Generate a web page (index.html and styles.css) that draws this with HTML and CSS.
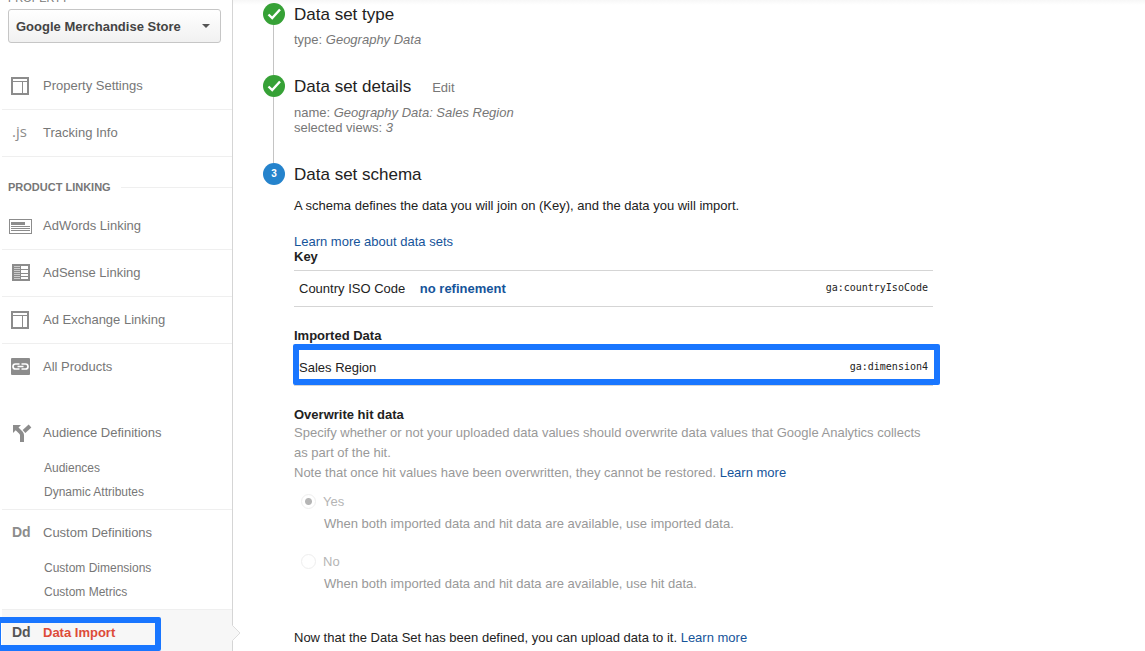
FILE: index.html
```html
<!DOCTYPE html>
<html lang="en">
  <head>
    <meta charset="UTF-8" />
    <meta name="viewport" content="width=device-width, initial-scale=1.0" />
    <title>Data Import</title>
    <link rel="stylesheet" href="styles.css">
  </head>
  <body>
    <div class="app">
      <aside class="sidebar">
        <label class="property-label" for="property">PROPERTY</label>
        <div class="property-picker">
          <select id="property">
            <option>Google Merchandise Store</option>
          </select>
          <svg class="caret" width="8" height="4" viewBox="0 0 8 4"><path d="M0 0h8L4 4z" fill="#555"/></svg>
        </div>

        <nav>
          <ul class="menu">
            <li>
              <a class="item" href="#">
                <svg class="icon" width="24" height="22" viewBox="0 0 24 22" shape-rendering="crispEdges"><path d="M3 3h18v18H3zM5 5v2h14V5zM5 8v11h9V8zM15 8v11h4V8z" fill="#8c8c8c" fill-rule="evenodd"/></svg>
                Property Settings
              </a>
            </li>
            <li>
              <a class="item" href="#"><span class="icon js">.js</span>Tracking Info</a>
            </li>
          </ul>

          <h2 class="section-title">PRODUCT LINKING</h2>
          <ul class="menu linking">
            <li>
              <a class="item" href="#">
                <svg class="icon" width="24" height="22" viewBox="0 0 24 22" shape-rendering="crispEdges"><path d="M1 5h23v15H1zM2 6v13h21V6zM3 8h14v3H3zM3 12h19v1H3zM3 14h19v1H3zM3 16h19v1H3z" fill="#8c8c8c" fill-rule="evenodd"/></svg>
                AdWords Linking
              </a>
            </li>
            <li>
              <a class="item" href="#">
                <svg class="icon" width="24" height="22" viewBox="0 0 24 22" shape-rendering="crispEdges"><path d="M4 3h18v17H4z" fill="#8c8c8c"/><path d="M6 5h6v1H6zM6 7h6v1H6zM6 9h6v1H6zM6 11h6v1H6zM6 13h6v1H6zM6 15h6v1H6zM6 17h6v1H6z" fill="#ccc"/><path d="M13 5h7v3h-7zM13 9h7v3h-7zM13 13h7v2h-7zM13 16h7v2h-7z" fill="#fff"/></svg>
                AdSense Linking
              </a>
            </li>
            <li>
              <a class="item" href="#">
                <svg class="icon" width="24" height="22" viewBox="0 0 24 22" shape-rendering="crispEdges"><path d="M3 3h18v18H3zM5 5v2h14V5zM5 8v11h9V8zM15 8v11h4V8z" fill="#8c8c8c" fill-rule="evenodd"/></svg>
                Ad Exchange Linking
              </a>
            </li>
            <li>
              <a class="item" href="#">
                <svg class="icon" width="24" height="22" viewBox="0 0 24 22"><rect x="3" y="3" width="19" height="17" rx="1" fill="#8c8c8c"/><path d="M11.500 9H7.500a2.500 2.500 0 0 0 0 5h4M13.500 9h4a2.500 2.500 0 0 1 0 5h-4M9.500 11.500h6" fill="none" stroke="#fff" stroke-width="1.700"/></svg>
                All Products
              </a>
            </li>
          </ul>

          <ul class="menu">
            <li>
              <a class="item" href="#">
                <svg class="icon" width="24" height="22" viewBox="0 0 24 22"><path d="M5 4h8l-2.500 2.500L14.500 10.500Q16 12 16 14V21h-4V14.500Q12 13.500 11.500 13L7.700 9.300 5 12z" fill="#8c8c8c"/><path d="M16 10.500l6-5.500" stroke="#8c8c8c" stroke-width="4"/></svg>
                Audience Definitions
              </a>
              <ul class="submenu">
                <li><a href="#">Audiences</a></li>
                <li><a href="#">Dynamic Attributes</a></li>
              </ul>
            </li>
            <li>
              <a class="item" href="#"><span class="icon dd">Dd</span>Custom Definitions</a>
              <ul class="submenu">
                <li><a href="#">Custom Dimensions</a></li>
                <li><a href="#">Custom Metrics</a></li>
              </ul>
            </li>
            <li class="active">
              <a class="item" href="#"><span class="icon dd">Dd</span>Data Import</a>
              <svg class="pointer" width="9" height="16" viewBox="0 0 9 16"><path d="M0 0l8 8-8 8z" fill="#f7f7f7"/><path d="M0.500 0.500L8 8l-7.500 7.500" fill="none" stroke="#ddd"/></svg>
              <span class="highlight highlight-menu"></span>
            </li>
          </ul>
        </nav>
      </aside>

      <main class="content">
        <section class="step">
          <div class="marker">
            <svg width="22" height="22" viewBox="0 0 22 22"><circle cx="11" cy="11" r="11" fill="#36a136"/><path d="M5.500 11.500l3.700 3.500 7.800-8.500" fill="none" stroke="#fff" stroke-width="2.400"/></svg>
          </div>
          <div class="step-body type-step">
            <h1>Data set type</h1>
            <p class="summary">type: <i>Geography Data</i></p>
          </div>
        </section>

        <section class="step">
          <div class="marker">
            <svg width="22" height="22" viewBox="0 0 22 22"><circle cx="11" cy="11" r="11" fill="#36a136"/><path d="M5.500 11.500l3.700 3.500 7.800-8.500" fill="none" stroke="#fff" stroke-width="2.400"/></svg>
          </div>
          <div class="step-body details-step">
            <div class="step-head">
              <h1>Data set details</h1>
              <a class="edit" href="#">Edit</a>
            </div>
            <p class="summary">name: <i>Geography Data: Sales Region</i><br>selected views: <i>3</i></p>
          </div>
        </section>

        <section class="step">
          <div class="marker"><span class="number">3</span></div>
          <div class="step-body">
            <h1>Data set schema</h1>
            <p class="intro">A schema defines the data you will join on (Key), and the data you will import.</p>
            <a href="#">Learn more about data sets</a>

            <h3>Key</h3>
            <table>
              <tr>
                <td>Country ISO Code <a class="refine" href="#">no refinement</a></td>
                <td class="code">ga:countryIsoCode</td>
              </tr>
            </table>

            <h3 class="spaced">Imported Data</h3>
            <div class="imported">
              <table>
                <tr>
                  <td>Sales Region</td>
                  <td class="code">ga:dimension4</td>
                </tr>
              </table>
              <span class="highlight highlight-row"></span>
            </div>

            <h3 class="spaced">Overwrite hit data</h3>
            <p class="help">Specify whether or not your uploaded data values should overwrite data values that Google Analytics collects as part of the hit.<br>Note that once hit values have been overwritten, they cannot be restored. <a href="#">Learn more</a></p>

            <div class="choice">
              <input type="radio" name="overwrite" id="yes" checked disabled>
              <label for="yes">Yes</label>
              <p>When both imported data and hit data are available, use imported data.</p>
            </div>
            <div class="choice">
              <input type="radio" name="overwrite" id="no" disabled>
              <label for="no">No</label>
              <p>When both imported data and hit data are available, use hit data.</p>
            </div>

            <p class="done">Now that the Data Set has been defined, you can upload data to it. <a href="#">Learn more</a></p>
          </div>
        </section>
      </main>
    </div>
  </body>
</html>
```
FILE: styles.css
```css
* {
  box-sizing: border-box;
}

body {
  margin: 0;
  font-family: Arial, "Liberation Sans", sans-serif;
  font-size: 13px;
  line-height: 15px;
  color: #222;
  background: #fff;
}

h1, h2, h3, p, ul {
  margin: 0;
  padding: 0;
}

ul {
  list-style: none;
}

a {
  color: #15549a;
  text-decoration: none;
}

.app {
  display: flex;
  min-height: 100vh;
  overflow: hidden;
}

/* sidebar */
.sidebar {
  flex: 0 0 233px;
  border-right: 1px solid #d5d5d5;
}

.property-label {
  display: block;
  margin: -9px 8px 3px;
  font-size: 11px;
  color: #777;
}

.property-picker {
  display: flex;
  align-items: center;
  margin: 0 11px 20px 8px;
}

.property-picker select {
  flex: 1;
  height: 34px;
  padding: 0 7px;
  appearance: none;
  border: 1px solid #c6c6c6;
  border-radius: 3px;
  background: linear-gradient(#fff, #f1f1f1);
  font-family: inherit;
  font-size: 13px;
  font-weight: bold;
  color: #444;
}

.caret {
  margin-left: -19px;
  margin-right: 11px;
  pointer-events: none;
}

.menu {
  padding-left: 2px;
}

.menu > li {
  position: relative;
  border-bottom: 1px solid #efefef;
}

.linking {
  margin-bottom: 20px;
}

.linking > li:last-child {
  border-bottom: none;
}

.item {
  display: flex;
  align-items: center;
  gap: 11px;
  height: 46px;
  padding: 0 0 2px 6px;
  color: #777;
}

.icon {
  flex: 0 0 24px;
}

.js {
  padding: 0 0 2px 4px;
  font-family: "Open Sans", sans-serif;
  font-size: 15px;
  color: #8c8c8c;
}

.dd {
  padding-left: 4px;
  font-size: 14px;
  font-weight: bold;
  color: #8c8c8c;
}

.section-title {
  display: flex;
  align-items: center;
  gap: 10px;
  padding: 23px 0 8px 8px;
  font-size: 11px;
  color: #777;
}

.section-title::after {
  content: "";
  flex: 1;
  height: 1px;
  background: #efefef;
}

.submenu {
  padding: 0 0 5px 42px;
  font-size: 12px;
  line-height: 24px;
}

.submenu a {
  color: #777;
}

.menu > .active {
  height: 41px;
  border-bottom: none;
  background: #f7f7f7;
}

.active .item {
  font-weight: bold;
  color: #dd4b39;
}

.active .dd {
  color: #555;
}

.pointer {
  position: absolute;
  left: 100%;
  top: 15px;
}

.highlight {
  position: absolute;
  border: 6px solid #1976ff;
  border-radius: 2px;
  pointer-events: none;
}

.highlight-menu {
  top: 7px;
  left: -7px;
  width: 166px;
  bottom: 0;
}

/* steps */
.content {
  flex: 1;
  padding: 3px 30px 0;
  background: linear-gradient(#f7f7f7, #fff 5px);
}

.step {
  display: flex;
  gap: 9px;
  max-width: 670px;
}

.marker {
  flex: 0 0 22px;
  display: flex;
  flex-direction: column;
}

.marker svg {
  display: block;
}

.step:not(:last-child) .marker::after {
  content: "";
  flex: 1;
  width: 1px;
  margin-left: 10px;
  background: #c4c4c4;
}

.number {
  border-radius: 50%;
  background: #2583cc;
  font-size: 10px;
  font-weight: bold;
  line-height: 22px;
  text-align: center;
  color: #fff;
}

.step-body {
  flex: 1;
}

.type-step,
.details-step {
  padding-bottom: 28px;
}

h1 {
  font-size: 17px;
  font-weight: normal;
  line-height: 24px;
}

.step-head {
  display: flex;
  align-items: center;
  gap: 21px;
}

.edit {
  color: #777;
}

.summary {
  padding-top: 6px;
  color: #777;
}

.type-step .summary {
  padding-top: 5px;
}

.intro {
  padding: 11px 0 21px;
}

h3 {
  margin-bottom: 6px;
  font-size: 13px;
}

.spaced {
  margin-top: 21px;
}

table {
  width: 100%;
  border-collapse: collapse;
}

td {
  height: 36px;
  padding: 0 5px;
  border: solid #d5d5d5;
  border-width: 1px 0;
}

.refine {
  margin-left: 11px;
  font-weight: bold;
}

.code {
  padding-bottom: 2px;
  font-family: Consolas, "DejaVu Sans Mono", monospace;
  font-size: 10px;
  text-align: right;
}

.imported {
  position: relative;
}

.highlight-row {
  top: -5px;
  right: -7px;
  bottom: 1px;
  left: -1px;
}

.spaced:has(+ .help) {
  margin-bottom: 1px;
}

.help {
  margin-bottom: 11px;
  line-height: 20px;
  color: #999;
}

.choice {
  display: grid;
  grid-template-columns: 15px 1fr;
  column-gap: 7px;
  row-gap: 7px;
  align-items: center;
  padding: 0 0 23px 7px;
  color: #b5b5b5;
}

.choice input {
  width: 15px;
  height: 15px;
  margin: 0;
  appearance: none;
  border: 1px solid #eee;
  border-radius: 50%;
}

.choice input:checked {
  background: radial-gradient(circle, #b5b5b5 3px, transparent 4px);
}

.choice p {
  grid-column: 2;
  padding-left: 1px;
  color: #999;
}

.done {
  padding: 16px 0 4px;
}
```
